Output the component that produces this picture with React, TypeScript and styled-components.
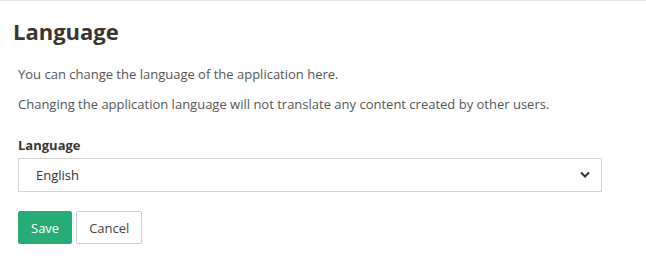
import React, { FC } from "react";
import styled, { createGlobalStyle } from "styled-components";

const colors = {
  text: "#555",
  heading: "#3a3531",
  border: "#d4d4d4",
  green: "#26ad77",
  topLine: "#e9e6e1",
};

const GlobalStyle = createGlobalStyle`
  body {
    margin: 0;
    background: #fff;
    font-family: "Open Sans", "Noto Sans", sans-serif;
  }
`;

const Page = styled.div`
  border-top: 1px solid ${colors.topLine};
  padding: 0 0 0 13px;
`;

const Title = styled.h1`
  margin: 0;
  padding-top: 15px;
  font-size: 22px;
  line-height: 30px;
  font-weight: 700;
  color: ${colors.heading};
`;

const Body = styled.div`
  padding: 18px 0 0 5px;
  width: 584px;
`;

const Text = styled.p`
  margin: 0 0 10px;
  font-size: 13px;
  line-height: 20px;
  color: ${colors.text};
`;

const Field = styled.div`
  margin-top: 21px;
  display: flex;
  flex-direction: column;
`;

const Label = styled.label`
  font-size: 13px;
  line-height: 20px;
  font-weight: 700;
  color: ${colors.heading};
  margin-bottom: 3px;
`;

const SelectWrap = styled.div`
  position: relative;
`;

const Select = styled.select`
  appearance: none;
  width: 100%;
  height: 34px;
  box-sizing: border-box;
  border: 1px solid ${colors.border};
  border-radius: 0;
  background: #fff;
  padding: 0 30px 0 17px;
  font-family: "Open Sans", sans-serif;
  font-size: 13px;
  color: #333;
  outline: none;
`;

const Chevron = styled.svg`
  position: absolute;
  right: 12px;
  top: 13px;
  pointer-events: none;
`;

const Actions = styled.div`
  display: flex;
  gap: 4px;
  margin-top: 19px;
`;

const Button = styled.button<{ $primary?: boolean }>`
  height: 33px;
  box-sizing: border-box;
  padding: 0 12px;
  border-radius: 2px;
  font-family: "Open Sans", sans-serif;
  font-size: 13px;
  cursor: pointer;
  border: 1px solid ${(p) => (p.$primary ? colors.green : "#ccc")};
  background: ${(p) => (p.$primary ? colors.green : "#fff")};
  color: ${(p) => (p.$primary ? "#fff" : "#444")};
`;

const App: FC = () => (
  <>
    <GlobalStyle />
    <Page>
      <Title>Language</Title>
      <Body>
        <Text>You can change the language of the application here.</Text>
        <Text>
          Changing the application language will not translate any content
          created by other users.
        </Text>
        <Field>
          <Label htmlFor="lang">Language</Label>
          <SelectWrap>
            <Select id="lang" defaultValue="en">
              <option value="en">English</option>
            </Select>
            <Chevron width="10" height="7" viewBox="0 0 10 7">
              <path d="M1 1.5 L5 5.5 L9 1.5" stroke="#333" strokeWidth="2" fill="none" />
            </Chevron>
          </SelectWrap>
        </Field>
        <Actions>
          <Button $primary>Save</Button>
          <Button>Cancel</Button>
        </Actions>
      </Body>
    </Page>
  </>
);

export default App;
